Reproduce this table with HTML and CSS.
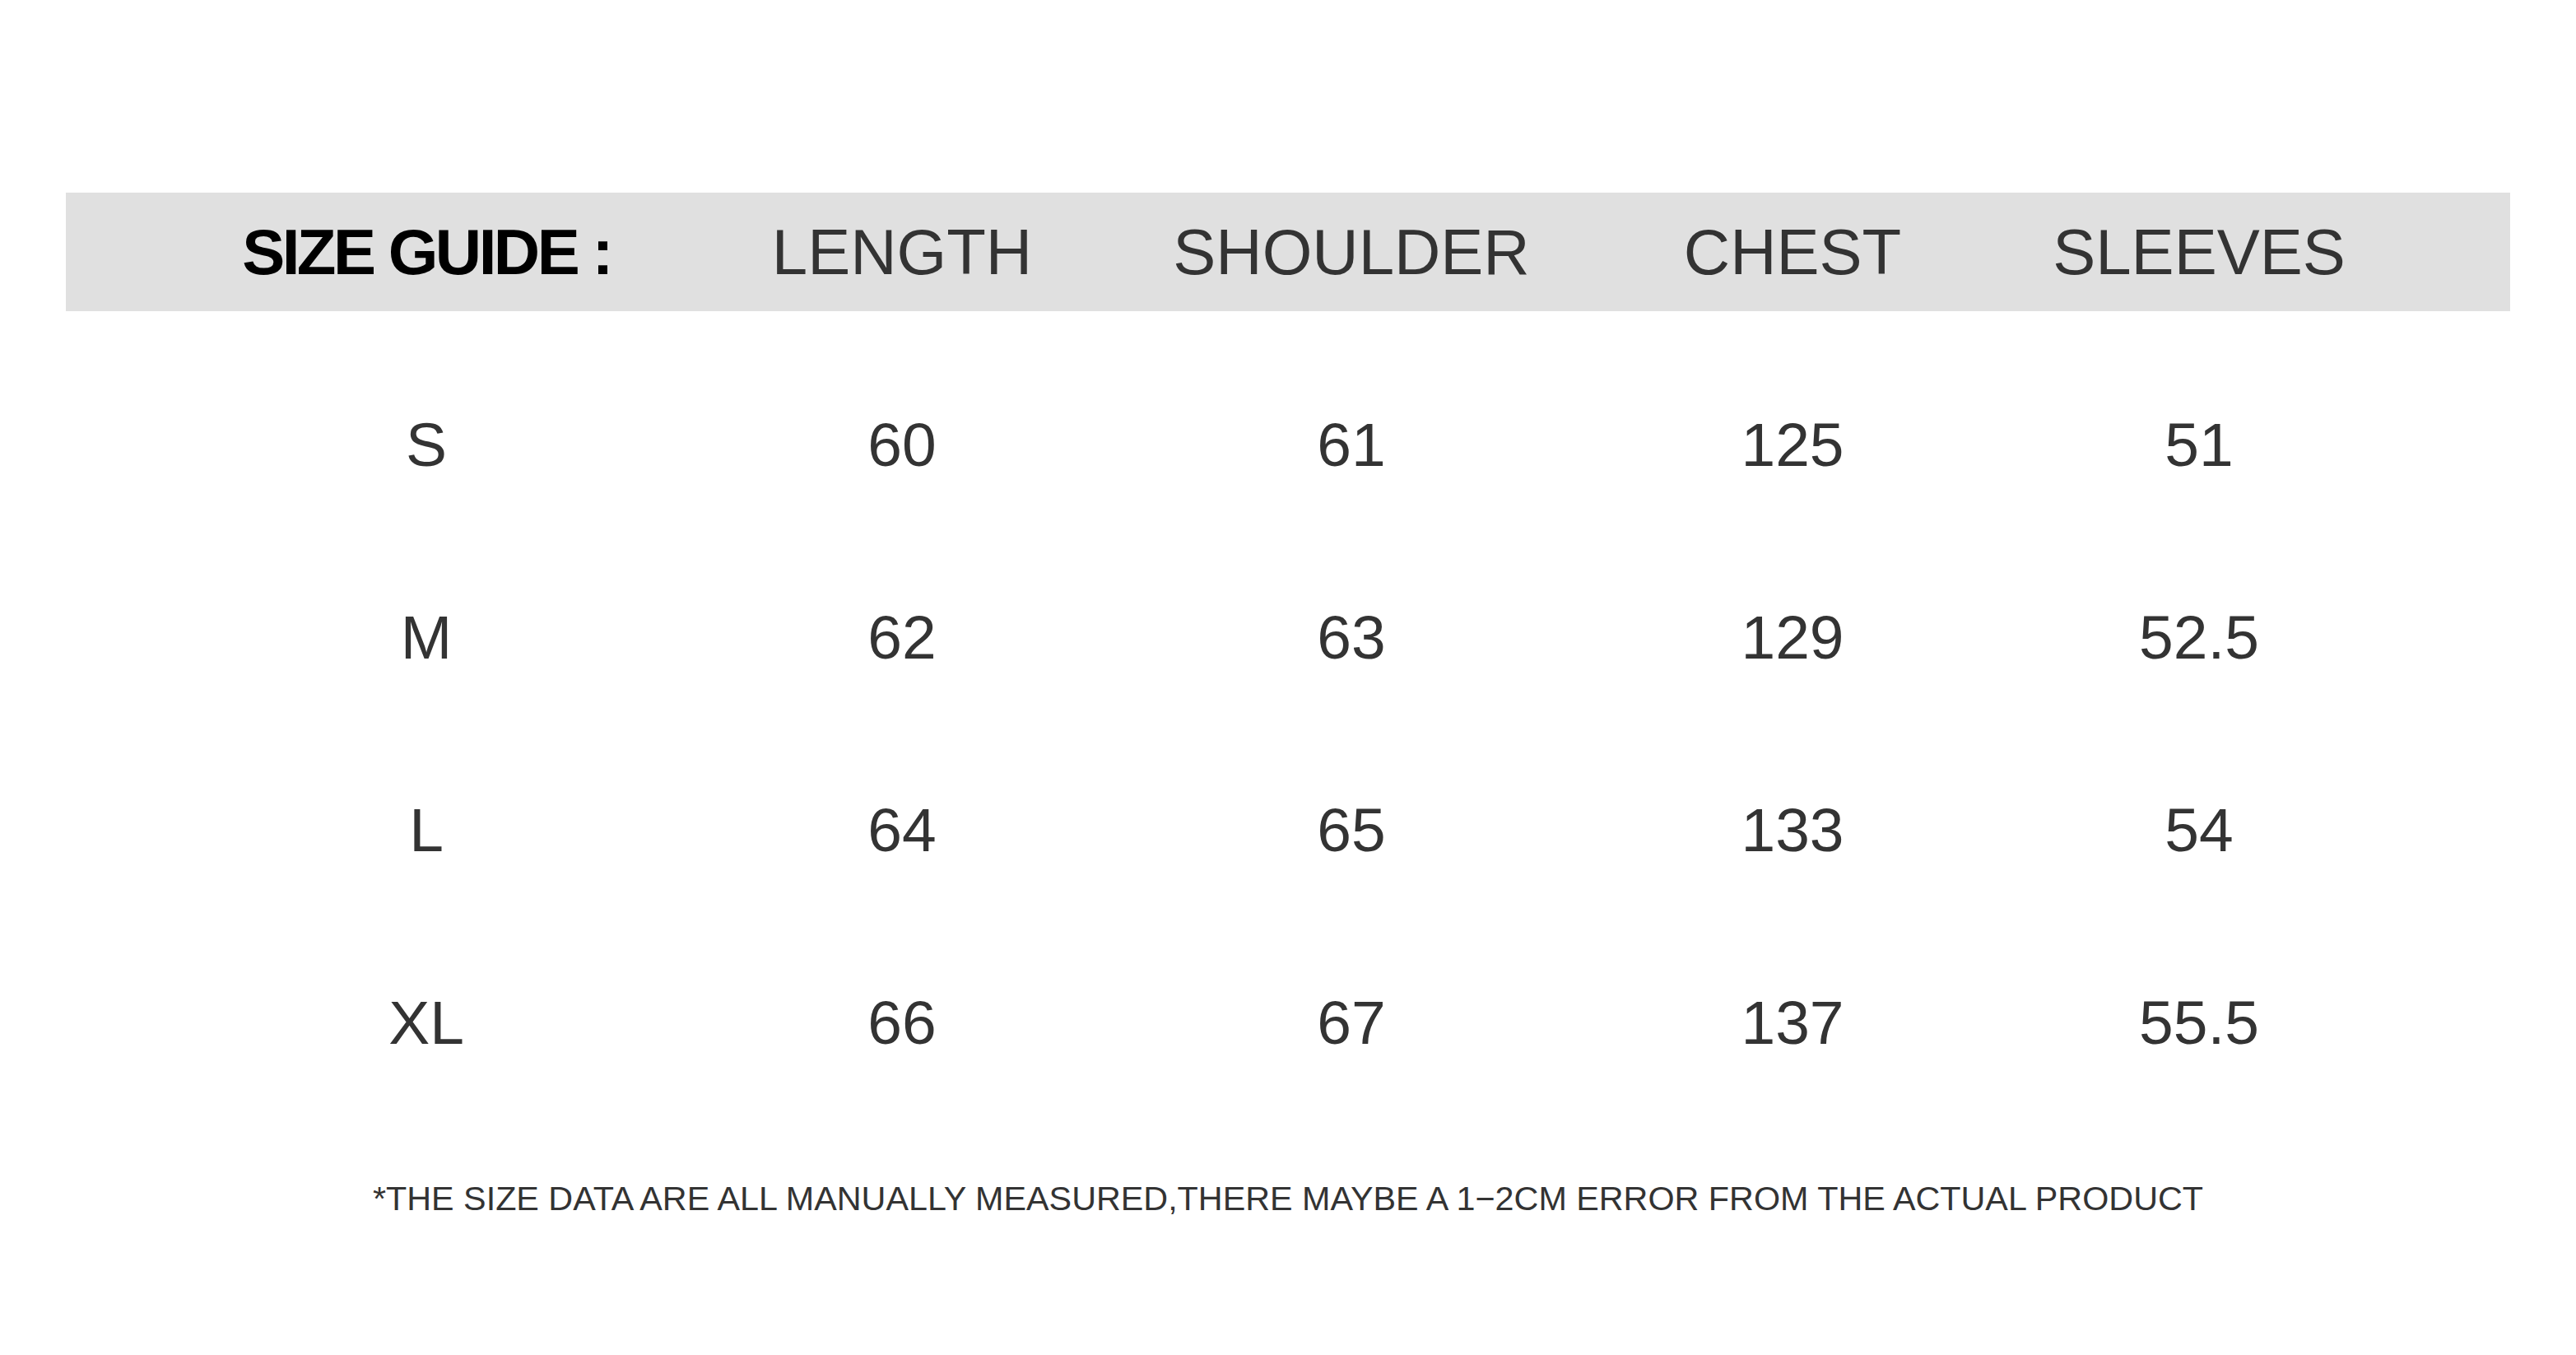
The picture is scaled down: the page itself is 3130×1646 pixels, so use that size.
FILE: index.html
```html
<!DOCTYPE html>
<html lang="en">
<head>
<meta charset="utf-8">
<title>Size Guide</title>
<link rel="stylesheet" href="styles.css">
</head>
<body>
<div class="page">
  <div class="bar">
    <div class="cell title">SIZE GUIDE :</div>
    <div class="cell">LENGTH</div>
    <div class="cell">SHOULDER</div>
    <div class="cell">CHEST</div>
    <div class="cell">SLEEVES</div>
  </div>
  <div class="rows">
    <div class="row"><div class="cell">S</div><div class="cell">60</div><div class="cell">61</div><div class="cell">125</div><div class="cell">51</div></div>
    <div class="row"><div class="cell">M</div><div class="cell">62</div><div class="cell">63</div><div class="cell">129</div><div class="cell">52.5</div></div>
    <div class="row"><div class="cell">L</div><div class="cell">64</div><div class="cell">65</div><div class="cell">133</div><div class="cell">54</div></div>
    <div class="row"><div class="cell">XL</div><div class="cell">66</div><div class="cell">67</div><div class="cell">137</div><div class="cell">55.5</div></div>
  </div>
  <p class="note">*THE SIZE DATA ARE ALL MANUALLY MEASURED,THERE MAYBE A 1−2CM ERROR FROM THE ACTUAL PRODUCT</p>
</div>
</body>
</html>
```

FILE: styles.css
```css
html, body {
  margin: 0;
  padding: 0;
  background: #ffffff;
}

body {
  width: 3130px;
  height: 1646px;
  overflow: hidden;
  font-family: "Liberation Sans", Arial, "Noto Sans CJK SC", sans-serif;
  color: #333333;
}

.page {
  padding-top: 234px;
}

.bar {
  margin: 0 80px;
  height: 144px;
  background: #e0e0e0;
  display: grid;
  grid-template-columns: 578px 578px 514px 558px 430px;
  padding-left: 149px;
  align-items: center;
  font-size: 78px;
}

.cell {
  text-align: center;
  white-space: nowrap;
}

.title {
  font-weight: bold;
  color: #000000;
  letter-spacing: -3.5px;
}

.rows {
  margin-top: 45px;
}

.row {
  height: 234px;
  display: grid;
  grid-template-columns: 578px 578px 514px 558px 430px;
  padding-left: 229px;
  align-items: center;
  font-size: 75px;
  color: #333333;
}

.note {
  margin: 73px 0 0;
  line-height: 48px;
  font-size: 41.3px;
  text-align: center;
  color: #333333;
}
```
